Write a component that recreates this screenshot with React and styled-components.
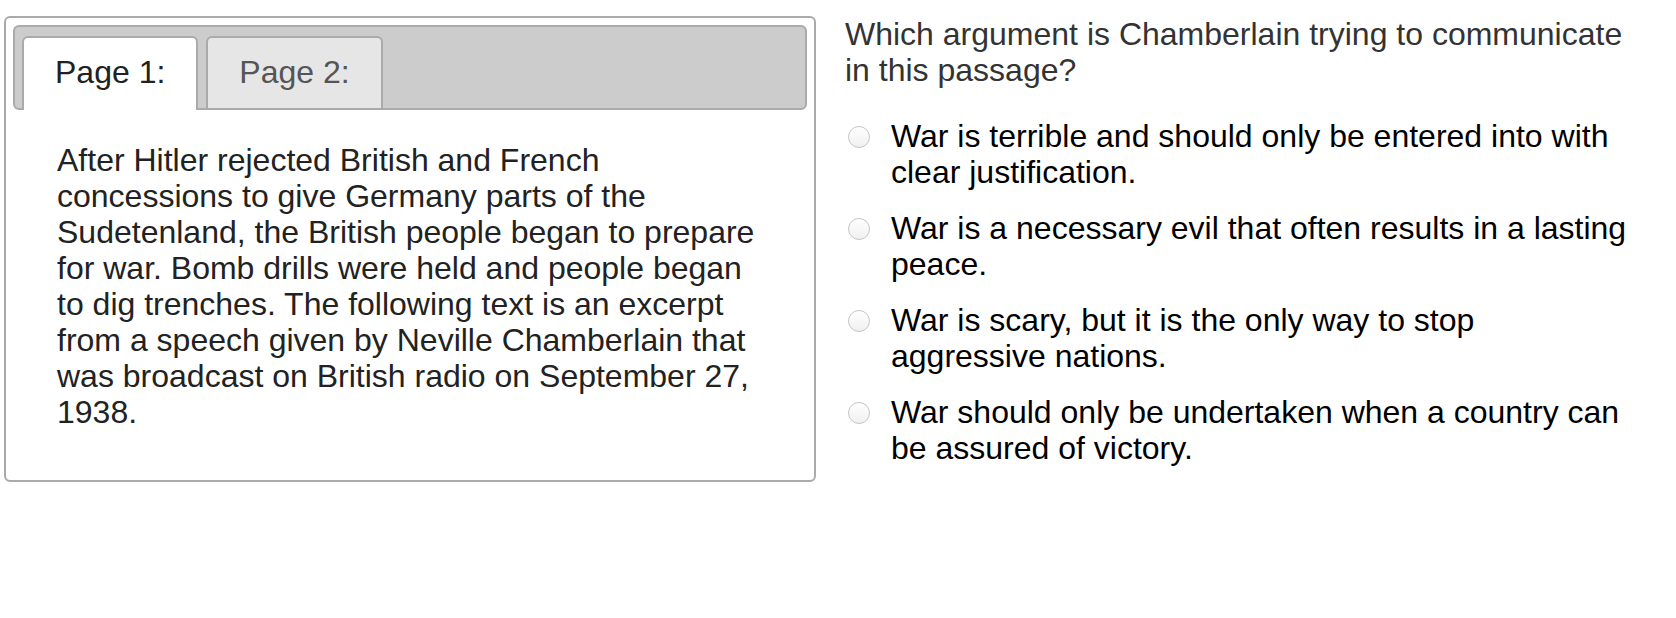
import React, { useState } from 'react';
import styled, { createGlobalStyle } from 'styled-components';

const passage =
  'After Hitler rejected British and French concessions to give Germany parts of the Sudetenland, the British people began to prepare for war. Bomb drills were held and people began to dig trenches. The following text is an excerpt from a speech given by Neville Chamberlain that was broadcast on British radio on September 27, 1938.';

const choices = [
  'War is terrible and should only be entered into with clear justification.',
  'War is a necessary evil that often results in a lasting peace.',
  'War is scary, but it is the only way to stop aggressive nations.',
  'War should only be undertaken when a country can be assured of victory.',
];

const App = () => {
  const [page, setPage] = useState(0);
  const [picked, setPicked] = useState(null);

  return (
    <Warp>
      <GlobalStyle />
      <Panel>
        <TabBar>
          {['Page 1:', 'Page 2:'].map((label, i) => (
            <Tab key={label} $active={page === i} onClick={() => setPage(i)}>
              {label}
            </Tab>
          ))}
        </TabBar>
        <Passage>{page === 0 ? passage : ''}</Passage>
      </Panel>
      <Question>
        <Prompt>Which argument is Chamberlain trying to communicate in this passage?</Prompt>
        <Choices>
          {choices.map((text, i) => (
            <Choice key={i} onClick={() => setPicked(i)}>
              <Radio $checked={picked === i} />
              <ChoiceText>{text}</ChoiceText>
            </Choice>
          ))}
        </Choices>
      </Question>
    </Warp>
  );
};

export default App;

const GlobalStyle = createGlobalStyle`
  body {
    margin: 0;
    background: #fff;
    font-family: "Liberation Sans", Arial, sans-serif;
  }
`;

const Warp = styled.div`
  display: flex;
  align-items: flex-start;
  padding: 16px 39px 0 4px;
`;

const Panel = styled.div`
  box-sizing: border-box;
  flex: 0 0 812px;
  height: 466px;
  padding: 7px;
  border: 2px solid #aaa;
  border-radius: 6px;
  background: #fff;
`;

const TabBar = styled.div`
  display: flex;
  align-items: flex-end;
  gap: 8px;
  height: 81px;
  padding: 0 7px;
  border: 2px solid #aaa;
  border-radius: 6px;
  background: #ccc;
`;

const Tab = styled.div`
  box-sizing: border-box;
  height: ${(p) => (p.$active ? '74px' : '72px')};
  margin-bottom: ${(p) => (p.$active ? '-2px' : '0')};
  padding: 16px 31px 0;
  border: 2px solid #aaa;
  border-bottom: none;
  border-radius: 6px 6px 0 0;
  background: ${(p) => (p.$active ? '#fff' : '#e6e6e6')};
  color: ${(p) => (p.$active ? '#212121' : '#555')};
  font-size: 32px;
  line-height: 37px;
  cursor: pointer;
`;

const Passage = styled.p`
  margin: 0;
  padding: 32px 44px 0;
  color: #222;
  font-size: 32px;
  line-height: 36px;
`;

const Question = styled.div`
  flex: 1;
  margin-left: 29px;
  color: #000;
  font-size: 32px;
  line-height: 36px;
`;

const Prompt = styled.div`
  color: #333;
`;

const Choices = styled.div`
  display: flex;
  flex-direction: column;
  gap: 20px;
  margin-top: 30px;
`;

const Choice = styled.label`
  display: flex;
  align-items: flex-start;
  padding-left: 3px;
  cursor: pointer;
`;

const Radio = styled.span`
  box-sizing: border-box;
  flex: 0 0 22px;
  height: 22px;
  margin-top: 8px;
  margin-right: 21px;
  border: 1px solid #c6c6c6;
  border-radius: 50%;
  background: ${(p) =>
    p.$checked
      ? 'radial-gradient(circle, #444 0 5px, #fff 6px)'
      : 'linear-gradient(#fff, #f0f0f0)'};
`;

const ChoiceText = styled.span`
  flex: 1;
`;
